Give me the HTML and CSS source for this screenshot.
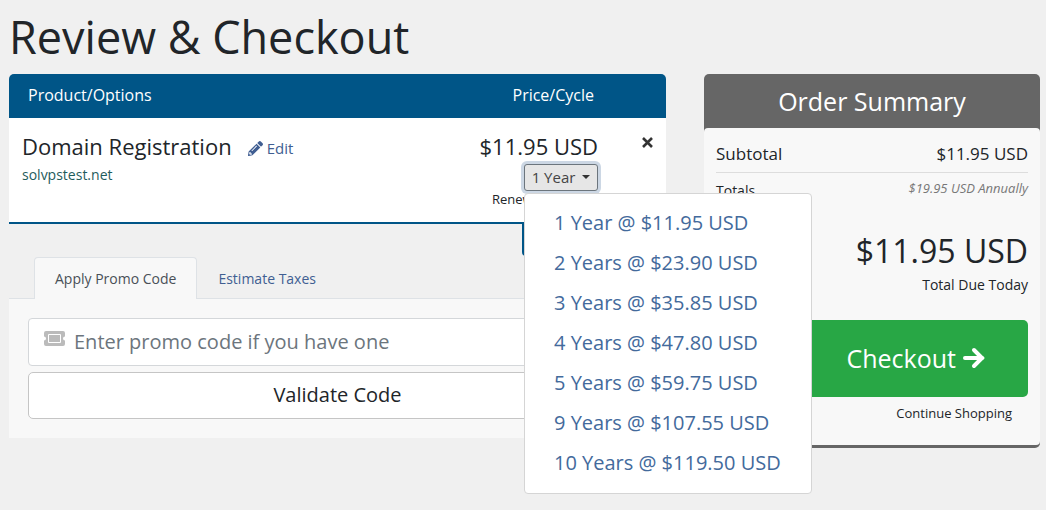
FILE: index.html
```html
<!DOCTYPE html>
<html lang="en">

<head>
    <meta charset="utf-8">
    <title>Review &amp; Checkout</title>
    <link rel="stylesheet" href="styles.css">
</head>

<body>
    <h1>Review &amp; Checkout</h1>
    <div class="cart">
        <main class="cart-body">
            <table class="products">
                <thead>
                    <tr>
                        <th>Product/Options</th>
                        <th class="price">Price/Cycle</th>
                        <th class="remove"></th>
                    </tr>
                </thead>
                <tbody>
                    <tr>
                        <td>
                            <div class="item-title">
                                <span>Domain Registration</span>
                                <a href="#" class="edit">
                                    <svg viewBox="0 0 512 512" width="15" height="15" fill="currentColor"><path d="M498 142l-46 46c-5 5-13 5-17 0L324 77c-5-5-5-12 0-17l46-46c19-19 49-19 68 0l60 60c19 19 19 49 0 68zm-214-42L22 362 0 484c-3 16 12 30 28 28l122-22 262-262c5-5 5-13 0-17L301 100c-4-5-12-5-17 0zM124 340c-5-6-5-14 0-20l154-154c6-5 14-5 20 0s5 14 0 20L144 340c-6 5-14 5-20 0zm-36 84h48v36l-64 12-32-31 12-65h36v48z"/></svg>
                                    Edit
                                </a>
                            </div>
                            <div class="item-domain">solvpstest.net</div>
                        </td>
                        <td class="price">
                            <div class="item-price">$11.95 USD</div>
                            <div class="dropdown">
                                <button type="button" class="cycle" aria-expanded="true">1 Year <span class="caret"></span></button>
                                <div class="menu">
                                    <a href="#">1 Year @ $11.95 USD</a>
                                    <a href="#">2 Years @ $23.90 USD</a>
                                    <a href="#">3 Years @ $35.85 USD</a>
                                    <a href="#">4 Years @ $47.80 USD</a>
                                    <a href="#">5 Years @ $59.75 USD</a>
                                    <a href="#">9 Years @ $107.55 USD</a>
                                    <a href="#">10 Years @ $119.50 USD</a>
                                </div>
                            </div>
                            <div class="renewal">Renews at $19.95</div>
                        </td>
                        <td class="remove">
                            <button type="button" aria-label="Remove">
                                <svg viewBox="0 0 11 11" width="11" height="11"><path d="M1 1l9 9M10 1l-9 9" stroke="#333" stroke-width="2.600"/></svg>
                            </button>
                        </td>
                    </tr>
                </tbody>
            </table>
            <div class="empty">
                <button type="button" aria-label="Empty Cart"></button>
            </div>

            <div class="tabs">
                <a href="#promo" class="active">Apply Promo Code</a>
                <a href="#taxes">Estimate Taxes</a>
            </div>
            <form class="promo" id="promo">
                <div class="field">
                    <label for="code" aria-label="Promo code">
                        <svg viewBox="0 0 21 15" width="21" height="15"><path d="M2 0h17a2 2 0 0 1 2 2v3.500a2 2 0 0 0 0 4V13a2 2 0 0 1-2 2H2a2 2 0 0 1-2-2V9.500a2 2 0 0 0 0-4V2a2 2 0 0 1 2-2z" fill="#bbb"/><path d="M4.500 3.500h12v8h-12z" fill="#bbb" stroke="#fff"/></svg>
                    </label>
                    <input type="text" id="code" placeholder="Enter promo code if you have one">
                </div>
                <button type="button" class="validate">Validate Code</button>
            </form>
        </main>

        <aside class="summary">
            <h2>Order Summary</h2>
            <div class="summary-body">
                <div class="row subtotal">
                    <span>Subtotal</span>
                    <span>$11.95 USD</span>
                </div>
                <div class="row totals">
                    <span>Totals</span>
                    <em>$19.95 USD Annually</em>
                </div>
                <div class="total">$11.95 USD</div>
                <div class="due">Total Due Today</div>
                <button type="button" class="checkout">
                    Checkout
                    <svg viewBox="0 0 24 22" width="24" height="22" fill="none" stroke="currentColor" stroke-width="4" stroke-linecap="round"><path d="M3 11h17"/><path d="M12 3l8 8-8 8" stroke-linejoin="miter"/></svg>
                </button>
                <a href="#" class="continue">Continue Shopping</a>
            </div>
        </aside>
    </div>
</body>

</html>
```

FILE: styles.css
```css
* {
    box-sizing: border-box;
}

body {
    min-height: 100vh;
    margin: 0;
    padding: 7px 6px 8px 9px;
    background-color: #f0f0f0;
    color: #212529;
    font-family: "Open Sans", sans-serif;
    font-size: 14px;
    line-height: 20px;
}

a {
    color: #405e92;
    text-decoration: none;
}

button,
input {
    font-family: inherit;
    color: inherit;
}

button {
    cursor: pointer;
}

h1 {
    margin: 0 0 7px;
    font-size: 45px;
    font-weight: 400;
    line-height: 60px;
}

.cart {
    display: flex;
    align-items: flex-start;
    gap: 38px;
}

.cart-body {
    flex: 1;
}

/* Products */
.products {
    width: 100%;
    border-collapse: separate;
    border-spacing: 0;
}

.products th {
    height: 44px;
    padding: 0 17px 2px 19px;
    background-color: #005587;
    color: #fff;
    font-size: 16px;
    font-weight: 400;
    text-align: left;
}

.products th:first-child {
    border-top-left-radius: 5px;
}

.products th:last-child {
    border-top-right-radius: 5px;
}

.products td {
    height: 106px;
    padding: 14px 13px 0;
    background-color: #fff;
    border-bottom: 2px solid #005587;
    vertical-align: top;
}

.products .price {
    text-align: right;
}

.products .remove {
    width: 55px;
    text-align: right;
}

.remove button {
    padding: 2px 0 0;
    border: 0;
    background: none;
}

.item-title {
    display: flex;
    align-items: center;
    gap: 16px;
    font-size: 22px;
    line-height: 28px;
}

.edit {
    display: flex;
    align-items: center;
    gap: 4px;
    padding-top: 4px;
    font-size: 15px;
    line-height: 24px;
}

.item-domain {
    margin-top: 5px;
    color: #1f5c5c;
}

.item-price {
    font-size: 22px;
    line-height: 28px;
}

.dropdown {
    position: relative;
    width: 74px;
    margin: 4px 0 0 auto;
}

.cycle {
    display: flex;
    align-items: center;
    justify-content: center;
    gap: 7px;
    width: 74px;
    height: 27px;
    padding: 0 0 2px;
    border: 1px solid #6c757d;
    border-radius: 3px;
    background-color: #e6e6e6;
    box-shadow: 0 0 0 3px #ccd7e4;
    color: #444;
    font-size: 15px;
}

.caret {
    border: 4px solid transparent;
    border-top-color: #333;
    border-bottom: 0;
}

.menu {
    position: absolute;
    top: 29px;
    left: 0;
    z-index: 1;
    padding: 9px 0 10px;
    border: 1px solid #d5d5d5;
    border-radius: 4px;
    background-color: #fff;
    text-align: left;
}

.menu a {
    display: block;
    padding: 0 30px 0 29px;
    color: #436a9c;
    font-size: 20px;
    line-height: 40px;
    white-space: nowrap;
}

.renewal {
    font-size: 13px;
    line-height: 16px;
}

.empty {
    display: flex;
    justify-content: flex-end;
    padding-right: 69px;
}

.empty button {
    width: 75px;
    height: 32px;
    padding: 0;
    border: 0;
    border-radius: 0 0 4px 4px;
    background-color: #005587;
}

/* Promo code */
.tabs {
    display: flex;
    padding: 1px 25px 0;
    border-bottom: 1px solid #dee2e6;
}

.tabs a {
    margin-bottom: -1px;
    padding: 11px 20px 10px;
    border: 1px solid transparent;
    border-bottom: 0;
    border-radius: 4px 4px 0 0;
}

.tabs .active {
    border-color: #dee2e6;
    background-color: #f8f8f8;
    color: #495057;
}

.promo {
    display: flex;
    flex-direction: column;
    gap: 6px;
    padding: 19px;
    background-color: #f8f8f8;
}

.field {
    display: flex;
    align-items: center;
    gap: 9px;
    height: 48px;
    padding: 0 15px 2px;
    border: 1px solid #d4d7da;
    border-radius: 4px;
    background-color: #fff;
}

.field label {
    height: 20px;
}

.field input {
    flex: 1;
    padding: 0;
    border: 0;
    outline: 0;
    background: none;
    font-size: 20px;
}

.field input::placeholder {
    color: #6c757d;
}

.validate {
    height: 47px;
    padding: 0 0 2px;
    border: 1px solid #c5c5c5;
    border-radius: 5px;
    background-color: #fff;
    font-size: 20px;
}

/* Order summary */
.summary {
    width: 336px;
    border-bottom: 3px solid #666;
    border-radius: 5px;
    background-color: #666;
}

.summary h2 {
    margin: 0;
    color: #fff;
    font-size: 25px;
    font-weight: 400;
    line-height: 54px;
    text-align: center;
}

.summary-body {
    display: flex;
    flex-direction: column;
    padding: 8px 12px 22px;
    border-radius: 4px;
    background-color: #f8f8f8;
    text-align: right;
}

.row {
    display: flex;
    justify-content: space-between;
    height: 37px;
}

.subtotal {
    border-bottom: 1px solid #ddd;
    font-size: 17px;
    line-height: 36px;
}

.totals {
    font-size: 14px;
    line-height: 36px;
}

.totals em {
    color: #777;
    font-size: 13px;
    line-height: 30px;
}

.total {
    margin-top: 18px;
    font-size: 32px;
    line-height: 46px;
}

.due {
    margin-top: 1px;
    margin-bottom: 25px;
}

.checkout {
    display: flex;
    align-items: center;
    justify-content: flex-end;
    gap: 6px;
    height: 77px;
    padding: 0 42px 2px;
    border: 0;
    border-radius: 5px;
    background-color: #28a745;
    color: #fff;
    font-size: 25px;
}

.continue {
    padding: 6px 16px 0;
    color: #212529;
    font-size: 13px;
}
```
